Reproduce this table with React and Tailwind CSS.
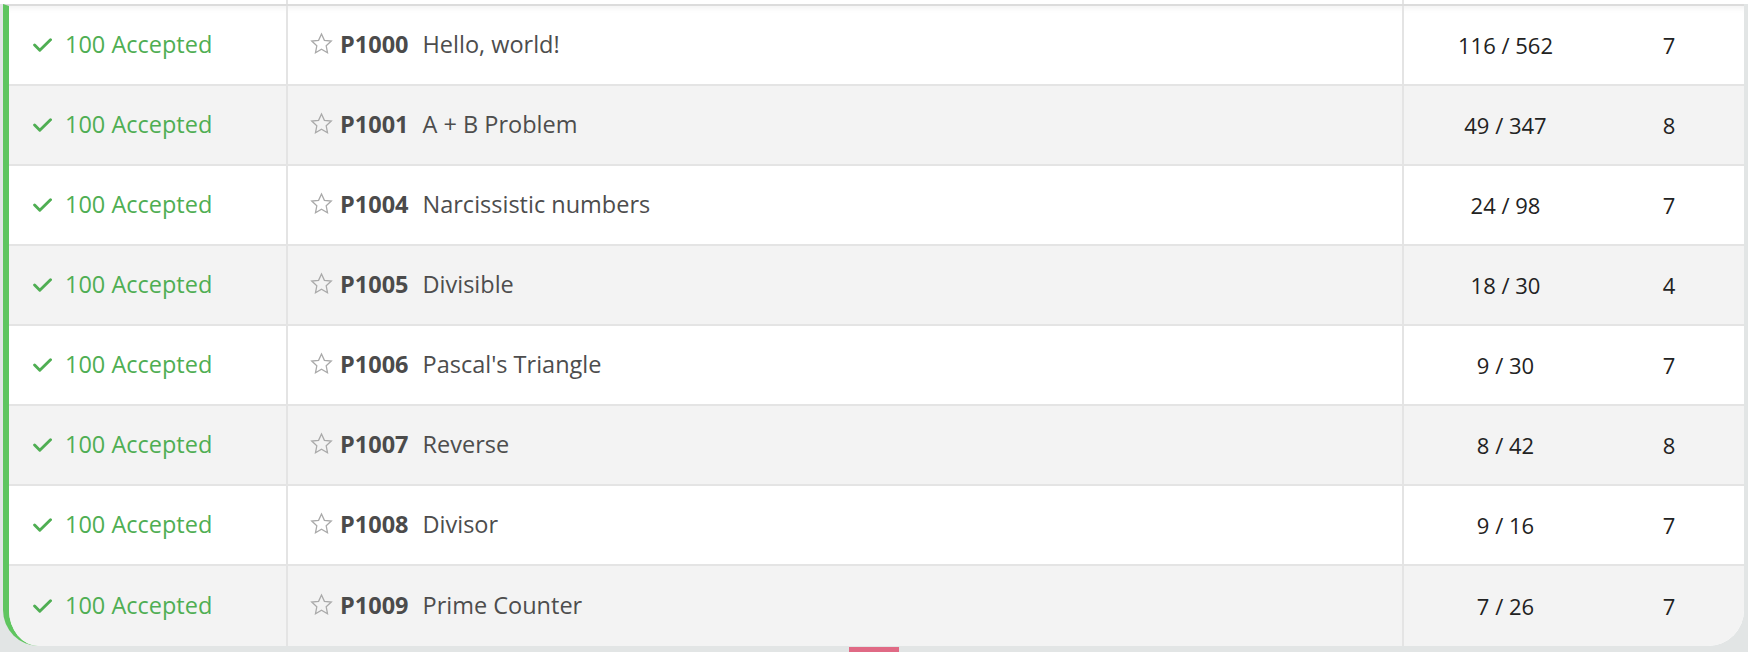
import React from 'react';

const problems = [
  { pid: 'P1000', title: 'Hello, world!', ac: 116, total: 562, diff: 7 },
  { pid: 'P1001', title: 'A + B Problem', ac: 49, total: 347, diff: 8 },
  { pid: 'P1004', title: 'Narcissistic numbers', ac: 24, total: 98, diff: 7 },
  { pid: 'P1005', title: 'Divisible', ac: 18, total: 30, diff: 4 },
  { pid: 'P1006', title: "Pascal's Triangle", ac: 9, total: 30, diff: 7 },
  { pid: 'P1007', title: 'Reverse', ac: 8, total: 42, diff: 8 },
  { pid: 'P1008', title: 'Divisor', ac: 9, total: 16, diff: 7 },
  { pid: 'P1009', title: 'Prime Counter', ac: 7, total: 26, diff: 7 },
];

const CheckIcon = () => (
  <svg width="19" height="14" viewBox="0 0 19 14" fill="none" className="shrink-0">
    <path d="M1.6 7 L6.8 12.2 L17.5 1.7" stroke="#4fae53" strokeWidth="2.9" strokeLinecap="round" strokeLinejoin="round" />
  </svg>
);

const StarIcon = () => (
  <svg width="25" height="24" viewBox="0 0 24 24" fill="none" className="shrink-0 -mt-[3px]">
    <polygon
      points="12,2 14.9,8.3 21.8,9.1 16.7,13.8 18,20.7 12,17.3 6,20.7 7.3,13.8 2.2,9.1 9.1,8.3"
      stroke="#a9a9a9"
      strokeWidth="1.3"
    />
  </svg>
);

const cols = 'grid grid-cols-[279px_1116px_203px_137px]';

const Row = ({ p, index, last }) => {
  const striped = index % 2 === 1;
  return (
    <div
      className={`${cols} ${last ? 'h-[80px]' : 'h-[80px] border-b-2 border-[#e4e4e4]'} ${
        striped ? 'bg-[#f3f3f3]' : 'bg-white'
      } ${index === 0 ? 'shadow-[inset_0_7px_7px_-6px_rgba(0,0,0,0.07)]' : ''}`}
    >
      <div className="flex items-center gap-[13px] pl-[24px] border-r-2 border-[#e4e4e4]">
        <CheckIcon />
        <span className="text-[23.5px] text-[#4fae53]">100 Accepted</span>
      </div>
      <div className="flex items-center pl-[21px] border-r-2 border-[#e4e4e4]">
        <StarIcon />
        <span className="ml-[6px] text-[23.5px] font-bold text-[#4b4b4b]">{p.pid}</span>
        <span className="ml-[14px] text-[23.5px] text-[#4d4d4d]">{p.title}</span>
      </div>
      <div className="flex items-center justify-center text-[22px] text-[#222]">
        {p.ac} / {p.total}
      </div>
      <div className="flex items-center justify-center pr-[13px] text-[22px] text-[#222]">
        {p.diff}
      </div>
    </div>
  );
};

export default function App() {
  return (
    <div className="w-[1748px] h-[652px] overflow-hidden bg-[#e2e5e5] font-['Open_Sans',sans-serif]">
      <div className="h-[4px] bg-white pl-[9px] pr-[4px]">
        <div className={`${cols} h-full`}>
          <div className="border-r-2 border-[#e4e4e4]" />
          <div className="border-r-2 border-[#e4e4e4]" />
          <div />
          <div />
        </div>
      </div>
      <div className="ml-[3px] mr-[4px] border-l-[6px] border-t-2 border-l-[#5fc55f] border-t-[#dcdcdc] rounded-b-[36px] overflow-hidden bg-white">
        {problems.map((p, i) => (
          <Row key={p.pid} p={p} index={i} last={i === problems.length - 1} />
        ))}
      </div>
      <div className="mt-[1px] mx-auto w-[50px] h-[6px] bg-[#e06a85]" />
    </div>
  );
}
